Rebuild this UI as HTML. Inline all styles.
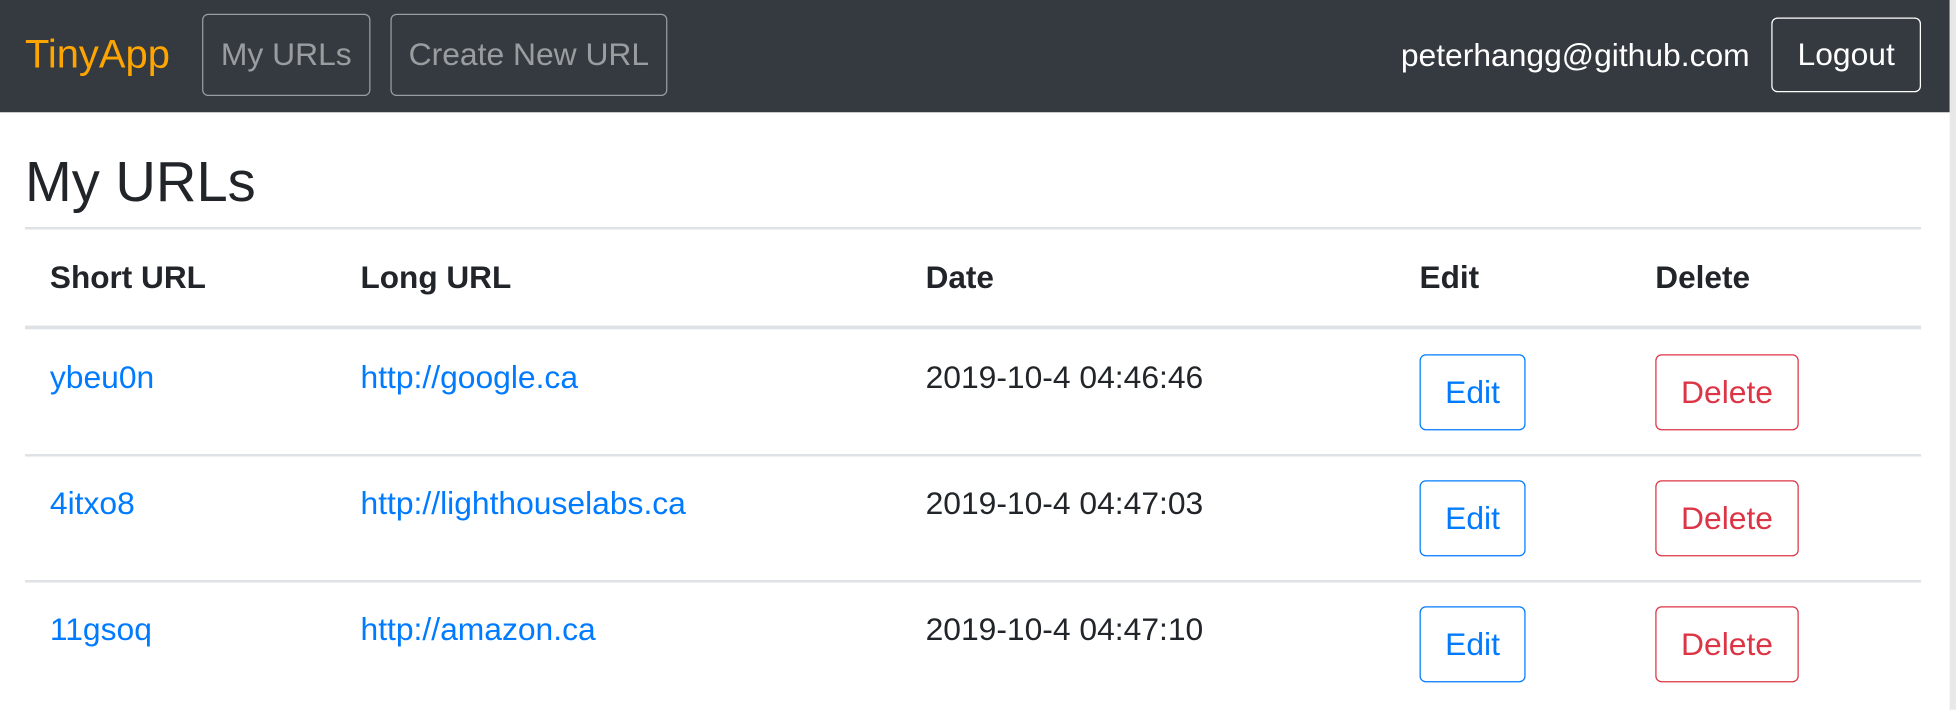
<!DOCTYPE html>
<html><head><meta charset="utf-8"><style>
html,body{margin:0;padding:0;background:#fff;overflow:hidden;width:1956px;height:710px}
#w{position:absolute;left:0;top:0;width:1568px;height:569px;transform:scale(1.2474);transform-origin:0 0;font-family:"Liberation Sans",Arial,sans-serif;color:#212529}
.a{position:absolute;line-height:1;white-space:nowrap}
.nav{position:absolute;left:0;top:0;width:1563px;height:90px;background:#343a40}
.sb{position:absolute;left:1563px;top:0;width:5px;height:569px;background:#e8e8e8}
.box{position:absolute;box-sizing:border-box;border-radius:5px;display:flex;align-items:center;justify-content:center;font-size:25.5px;line-height:1;padding-top:2px}
.ln{position:absolute;left:20px;width:1520px;background:#dee2e6}
.bl{color:#007bff}.rd{color:#dc3545}
.b{font-weight:bold;font-size:25.3px!important}
.t{font-size:25.5px}
</style></head><body><div id="w">
<div class="nav"></div><div class="sb"></div>
<div class="a" style="left:20px;top:27px;font-size:32px;color:#ffa500">TinyApp</div>
<div class="box" style="left:162px;top:11px;width:135px;height:66px;border:1.5px solid rgba(255,255,255,.5);color:rgba(255,255,255,.5)">My URLs</div>
<div class="box" style="left:313px;top:11px;width:222px;height:66px;border:1.5px solid rgba(255,255,255,.5);color:rgba(255,255,255,.5)">Create New URL</div>
<div class="a" style="left:1123px;top:33px;font-size:25.5px;color:#fff">peterhangg@github.com</div>
<div class="box" style="left:1420px;top:14px;width:120px;height:60px;border:1.5px solid #fff;color:#fff">Logout</div>

<div class="a" style="left:20px;top:123px;font-size:45px">My URLs</div>
<div class="ln" style="top:182px;height:1.5px"></div>

<div class="a b" style="left:40px;top:211px">Short URL</div>
<div class="a b" style="left:289px;top:211px">Long URL</div>
<div class="a b" style="left:742px;top:211px">Date</div>
<div class="a b" style="left:1138px;top:211px">Edit</div>
<div class="a b" style="left:1327px;top:211px">Delete</div>
<div class="ln" style="top:261px;height:3px"></div>

<div class="a bl t" style="left:40px;top:291px">ybeu0n</div>
<div class="a bl t" style="left:289px;top:291px">http://google.ca</div>
<div class="a t" style="left:742px;top:291px">2019-10-4 04:46:46</div>
<div class="box bl" style="left:1138px;top:284px;width:85px;height:61px;border:1.5px solid #007bff">Edit</div>
<div class="box rd" style="left:1327px;top:284px;width:115px;height:61px;border:1.5px solid #dc3545">Delete</div>
<div class="ln" style="top:364px;height:1.5px"></div>

<div class="a bl t" style="left:40px;top:392px">4itxo8</div>
<div class="a bl t" style="left:289px;top:392px">http://lighthouselabs.ca</div>
<div class="a t" style="left:742px;top:392px">2019-10-4 04:47:03</div>
<div class="box bl" style="left:1138px;top:385px;width:85px;height:61px;border:1.5px solid #007bff">Edit</div>
<div class="box rd" style="left:1327px;top:385px;width:115px;height:61px;border:1.5px solid #dc3545">Delete</div>
<div class="ln" style="top:465px;height:1.5px"></div>

<div class="a bl t" style="left:40px;top:493px">11gsoq</div>
<div class="a bl t" style="left:289px;top:493px">http://amazon.ca</div>
<div class="a t" style="left:742px;top:493px">2019-10-4 04:47:10</div>
<div class="box bl" style="left:1138px;top:486px;width:85px;height:61px;border:1.5px solid #007bff">Edit</div>
<div class="box rd" style="left:1327px;top:486px;width:115px;height:61px;border:1.5px solid #dc3545">Delete</div>
</div></body></html>
